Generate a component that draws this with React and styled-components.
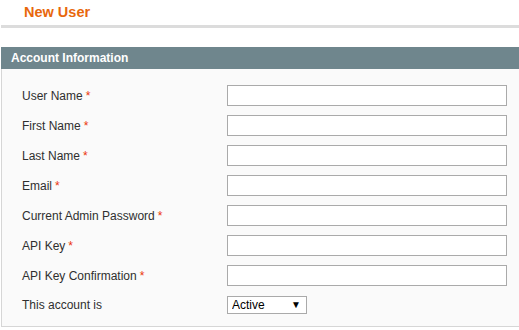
import React from "react";
import styled, { createGlobalStyle } from "styled-components";

const Global = createGlobalStyle`
  html, body { margin: 0; padding: 0; background: #fff; overflow: hidden; }
  body { font-family: Arial, "Liberation Sans", sans-serif; font-size: 12px; color: #2f2f2f; }
`;

const Page = styled.div`
  padding-left: 1px;
  width: 540px;
`;

const TitleBar = styled.div`
  height: 25px;
  border-bottom: 3px solid #dcdcdc;
  box-sizing: content-box;
  display: flex;
  align-items: center;
  padding-left: 23px;
`;

const Title = styled.h3`
  margin: 0;
  font-size: 14.5px;
  font-weight: bold;
  color: #e8670c;
  line-height: 16px;
  margin-top: -1px;
`;

const Section = styled.section`
  margin-top: 19px;
`;

const SectionHead = styled.div`
  height: 22px;
  background: #6f868d;
  color: #fff;
  font-weight: bold;
  font-size: 12px;
  display: flex;
  align-items: center;
  padding-left: 10px;
`;

const SectionBody = styled.div`
  background: #fafafa;
  border-left: 1px solid #d6d6d6;
  border-bottom: 1px solid #d6d6d6;
  height: 258px;
  box-sizing: border-box;
  padding: 16px 0 0 20px;
  display: flex;
  flex-direction: column;
  gap: 10px;
`;

const Row = styled.div`
  display: grid;
  grid-template-columns: 205px 280px;
  align-items: center;
  height: ${(p) => (p.$short ? "18px" : "20px")};
  margin-top: ${(p) => (p.$short ? "1px" : "0")};
`;

const Label = styled.label`
  font-size: 12px;
  color: #2f2f2f;
  white-space: nowrap;
`;

const Req = styled.span`
  color: #eb340a;
  margin-left: 3px;
`;

const Input = styled.input`
  box-sizing: border-box;
  width: 280px;
  height: 21px;
  border: 1px solid #aaa;
  background: #fff;
  margin: 0;
  padding: 0 3px;
  font: 12px Arial, "Liberation Sans", sans-serif;
`;

const SelectWrap = styled.div`
  position: relative;
  width: 80px;
  height: 18px;
`;

const Select = styled.select`
  appearance: none;
  -webkit-appearance: none;
  box-sizing: border-box;
  width: 80px;
  height: 18px;
  border: 1px solid #aaa;
  border-radius: 0;
  background: #fff;
  margin: 0;
  padding: 0 0 0 4px;
  font: 12px Arial, "Liberation Sans", sans-serif;
  color: #000;
`;

const Arrow = styled.span`
  position: absolute;
  right: 6px;
  top: 3px;
  font-size: 10px;
  line-height: 12px;
  color: #000;
  pointer-events: none;
`;

const fields = [
  "User Name",
  "First Name",
  "Last Name",
  "Email",
  "Current Admin Password",
  "API Key",
  "API Key Confirmation",
];

export default function App() {
  return (
    <Page>
      <Global />
      <TitleBar>
        <Title>New User</Title>
      </TitleBar>
      <Section>
        <SectionHead>Account Information</SectionHead>
        <SectionBody>
          {fields.map((f) => (
            <Row key={f}>
              <Label>
                {f}
                <Req>*</Req>
              </Label>
              <Input type="text" />
            </Row>
          ))}
          <Row $short>
            <Label>This account is</Label>
            <SelectWrap>
              <Select defaultValue="1">
                <option value="1">Active</option>
                <option value="0">Inactive</option>
              </Select>
              <Arrow>▼</Arrow>
            </SelectWrap>
          </Row>
        </SectionBody>
      </Section>
    </Page>
  );
}
